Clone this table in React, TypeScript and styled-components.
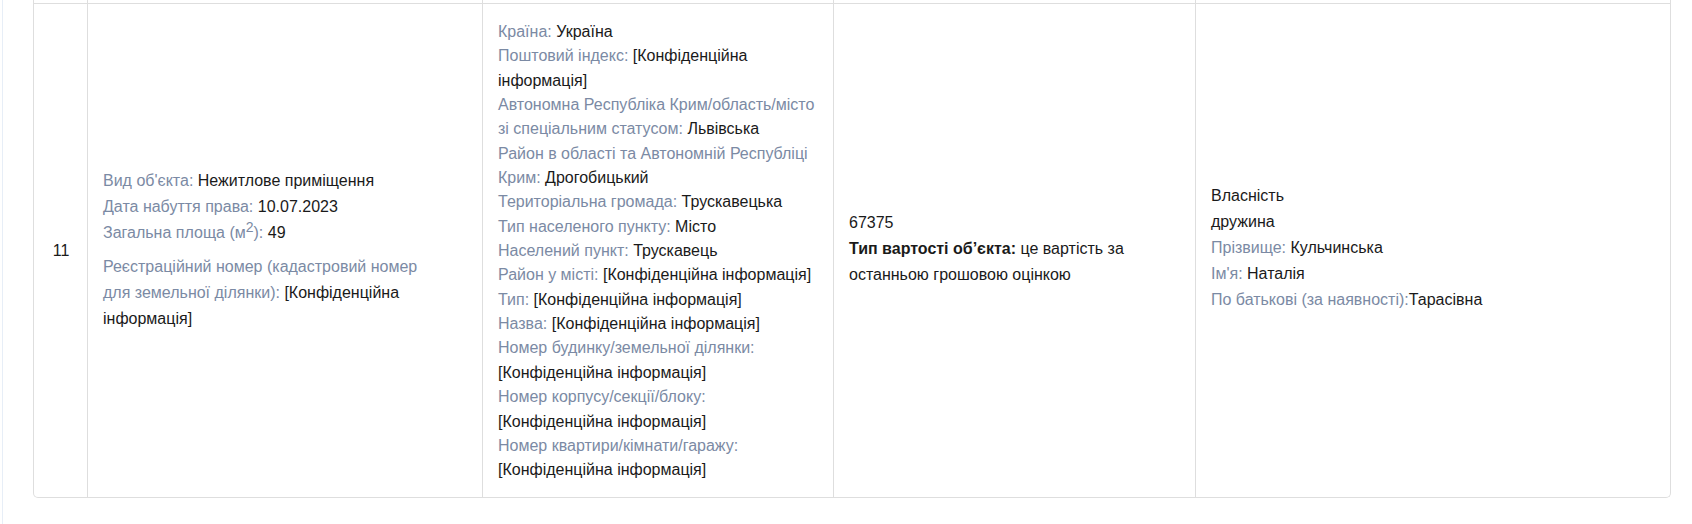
import React from "react";
import styled, { createGlobalStyle } from "styled-components";

const GlobalStyle = createGlobalStyle`
  html, body {
    margin: 0;
    padding: 0;
    background: #ffffff;
  }
  body {
    font-family: "Liberation Sans", Arial, sans-serif;
    font-size: 16px;
    color: #1a1a1a;
  }
`;

const Page = styled.div`
  padding-left: 2px;
  height: 524px;
  overflow: hidden;
`;

const Panel = styled.div`
  border-left: 1px solid #e7eef7;
  padding-left: 30px;
  height: 100%;
`;

const Card = styled.div`
  box-sizing: border-box;
  width: 1638px;
  display: grid;
  grid-template-columns: 54px 395px 351px 362px 1fr;
  border: 1px solid #dedede;
  border-top: none;
  border-radius: 0 0 5px 5px;
  background: #fff;
`;

const Stub = styled.div<{ $last?: boolean }>`
  height: 3px;
  border-right: ${(p) => (p.$last ? "none" : "1px solid #dedede")};
`;

const Cell = styled.div<{ $last?: boolean; $center?: boolean }>`
  box-sizing: border-box;
  border-top: 1px solid #dedede;
  border-right: ${(p) => (p.$last ? "none" : "1px solid #dedede")};
  padding: 16px 14px 14px 15px;
  display: flex;
  flex-direction: column;
  justify-content: center;
  align-items: ${(p) => (p.$center ? "center" : "flex-start")};
  line-height: 26px;
`;

const Block = styled.div<{ $lift?: number }>`
  margin-bottom: ${(p) => (p.$lift ?? 0) * 2}px;
`;

const AddressList = styled.div`
  line-height: 24.35px;
`;

const Line = styled.div``;

const Narrow = styled.div`
  max-width: 330px;
  margin-top: 8px;
`;

const Label = styled.span`
  color: #7b8aa4;
`;

const Value = styled.span`
  color: #1a1a1a;
`;

const Strong = styled.span`
  font-weight: bold;
  color: #1a1a1a;
`;

const Sup = styled.sup`
  font-size: 14px;
  line-height: 0;
  vertical-align: 0.45em;
`;

const address: [string, string][] = [
  ["Країна:", "Україна"],
  ["Поштовий індекс:", "[Конфіденційна інформація]"],
  ["Автономна Республіка Крим/область/місто зі спеціальним статусом:", "Львівська"],
  ["Район в області та Автономній Республіці Крим:", "Дрогобицький"],
  ["Територіальна громада:", "Трускавецька"],
  ["Тип населеного пункту:", "Місто"],
  ["Населений пункт:", "Трускавець"],
  ["Район у місті:", "[Конфіденційна інформація]"],
  ["Тип:", "[Конфіденційна інформація]"],
  ["Назва:", "[Конфіденційна інформація]"],
  ["Номер будинку/земельної ділянки:", "[Конфіденційна інформація]"],
  ["Номер корпусу/секції/блоку:", "[Конфіденційна інформація]"],
  ["Номер квартири/кімнати/гаражу:", "[Конфіденційна інформація]"],
];

export default function App() {
  return (
    <>
      <GlobalStyle />
      <Page>
        <Panel>
          <Card>
            <Stub />
            <Stub />
            <Stub />
            <Stub />
            <Stub $last />

            <Cell $center>11</Cell>

            <Cell>
              <Block $lift={1}>
                <Line>
                  <Label>Вид об'єкта:</Label> <Value>Нежитлове приміщення</Value>
                </Line>
                <Line>
                  <Label>Дата набуття права:</Label> <Value>10.07.2023</Value>
                </Line>
                <Line>
                  <Label>
                    Загальна площа (м<Sup>2</Sup>):
                  </Label>{" "}
                  <Value>49</Value>
                </Line>
                <Narrow>
                  <Label>Реєстраційний номер (кадастровий номер для земельної ділянки):</Label>{" "}
                  <Value>[Конфіденційна інформація]</Value>
                </Narrow>
              </Block>
            </Cell>

            <Cell>
              <AddressList>
                {address.map(([l, v]) => (
                  <Line key={l}>
                    <Label>{l}</Label> <Value>{v}</Value>
                  </Line>
                ))}
              </AddressList>
            </Cell>

            <Cell>
              <Block $lift={2}>
                <Line>
                  <Value>67375</Value>
                </Line>
                <Line>
                  <Strong>Тип вартості об’єкта:</Strong>{" "}
                  <Value>це вартість за останньою грошовою оцінкою</Value>
                </Line>
              </Block>
            </Cell>

            <Cell $last>
              <Block $lift={3}>
                <Line>
                  <Value>Власність</Value>
                </Line>
                <Line>
                  <Value>дружина</Value>
                </Line>
                <Line>
                  <Label>Прізвище:</Label> <Value>Кульчинська</Value>
                </Line>
                <Line>
                  <Label>Ім'я:</Label> <Value>Наталія</Value>
                </Line>
                <Line>
                  <Label>По батькові (за наявності):</Label>
                  <Value>Тарасівна</Value>
                </Line>
              </Block>
            </Cell>
          </Card>
        </Panel>
      </Page>
    </>
  );
}
